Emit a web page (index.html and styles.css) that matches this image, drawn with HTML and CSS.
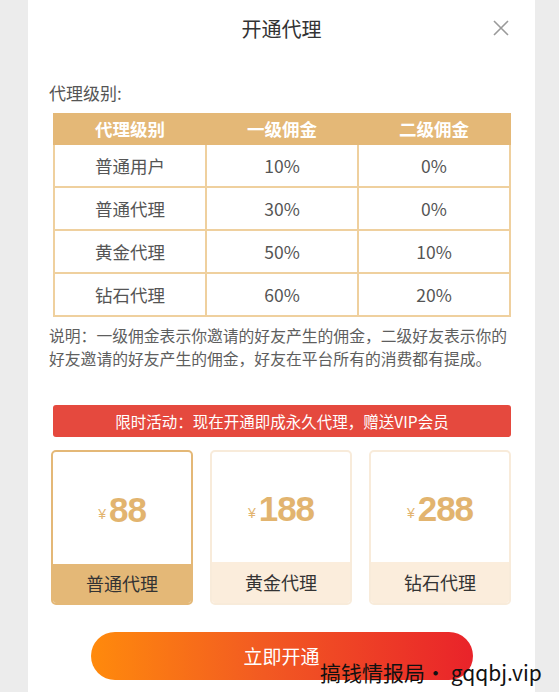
FILE: index.html
```html
<!DOCTYPE html>
<html lang="zh">
<head>
<meta charset="utf-8">
<link rel="stylesheet" href="styles.css">
</head>
<body>
<div class="panel">
  <div class="header">
    <span class="title">开通代理</span>
    <svg class="close" width="16" height="16" viewBox="0 0 16 16"><path d="M1 1L15 15M15 1L1 15" stroke="#9a9a9a" stroke-width="1.6" fill="none"/></svg>
  </div>
  <div class="label">代理级别:</div>
  <table class="levels">
    <thead>
      <tr><th>代理级别</th><th>一级佣金</th><th>二级佣金</th></tr>
    </thead>
    <tbody>
      <tr><td>普通用户</td><td>10%</td><td>0%</td></tr>
      <tr><td>普通代理</td><td>30%</td><td>0%</td></tr>
      <tr><td>黄金代理</td><td>50%</td><td>10%</td></tr>
      <tr><td>钻石代理</td><td>60%</td><td>20%</td></tr>
    </tbody>
  </table>
  <p class="desc">说明：一级佣金表示你邀请的好友产生的佣金，二级好友表示你的好友邀请的好友产生的佣金，好友在平台所有的消费都有提成。</p>
  <div class="banner">限时活动：现在开通即成永久代理，赠送VIP会员</div>
  <div class="cards">
    <div class="card active">
      <div class="price"><span class="yen">¥</span><span class="num">88</span></div>
      <div class="name">普通代理</div>
    </div>
    <div class="card">
      <div class="price"><span class="yen">¥</span><span class="num">188</span></div>
      <div class="name">黄金代理</div>
    </div>
    <div class="card">
      <div class="price"><span class="yen">¥</span><span class="num">288</span></div>
      <div class="name">钻石代理</div>
    </div>
  </div>
  <div class="btn-wrap"><div class="btn">立即开通</div></div>
</div>
<div class="watermark">搞钱情报局· gqqbj.vip</div>
</body>
</html>
```
FILE: styles.css
```css
* { box-sizing: border-box; }
html, body { margin: 0; padding: 0; }
body {
  background: #ececec;
  width: 559px;
  height: 692px;
  overflow: hidden;
  position: relative;
  font-family: "Noto Sans CJK SC", "Noto Sans", sans-serif;
}
.panel {
  margin-left: 28px;
  width: 507px;
  height: 692px;
  background: #fff;
  padding: 0 21px;
}
.header {
  height: 56px;
  display: flex;
  align-items: center;
  justify-content: center;
  position: relative;
}
.title {
  font-size: 20px;
  color: #333;
}
.close {
  position: absolute;
  right: 5px;
  top: 20px;
}
.label {
  margin-top: 26px;
  font-size: 17px;
  line-height: 22px;
  color: #555;
}
.levels {
  margin: 9px 0 0 4px;
  width: 458px;
  border-collapse: collapse;
  table-layout: fixed;
}
.levels th {
  background: #e4b877;
  color: #fff;
  font-weight: bold;
  font-size: 17.5px;
  height: 30px;
  padding: 0;
  line-height: 28px;
  border: 2px solid #e4b877;
}
.levels td {
  border: 2px solid #efd09e;
  height: 43px;
  padding: 0;
  text-align: center;
  font-size: 17.5px;
  color: #555;
}
.desc {
  margin: 7px 0 0 0;
  font-size: 15.8px;
  line-height: 23px;
  color: #5e5e5e;
}
.banner {
  margin: 35px 0 0 4px;
  width: 458px;
  height: 32px;
  line-height: 32px;
  background: #e5493e;
  border-radius: 3px;
  color: #fff;
  text-align: center;
  font-size: 15.5px;
}
.cards {
  margin: 13px 0 0 2px;
  display: flex;
  gap: 17px;
}
.card {
  width: 142px;
  height: 155px;
  border: 2px solid #f8ebda;
  border-radius: 5px;
  overflow: hidden;
  display: flex;
  flex-direction: column;
}
.card.active { border-color: #e4b877; }
.price {
  flex: 1;
  display: flex;
  align-items: center;
  justify-content: center;
  color: #e2b46f;
  padding-top: 4px;
}
.yen {
  font-size: 14px;
  margin-right: 3px;
  margin-top: 8px;
  font-family: "Liberation Sans", sans-serif;
}
.num {
  font-family: "Liberation Sans", sans-serif;
  font-weight: bold;
  font-size: 35px;
  letter-spacing: -1px;
}
.name {
  height: 41px;
  line-height: 41px;
  text-align: center;
  background: #fbeddc;
  font-size: 18px;
  color: #333;
}
.card.active .name { background: #e4b877; height: 39px; line-height: 39px; }
.btn-wrap {
  margin-top: 27px;
  display: flex;
  justify-content: center;
}
.btn {
  width: 382px;
  height: 48px;
  border-radius: 24px;
  background: linear-gradient(90deg, #ff8a0c 0%, #f25a22 45%, #e9232a 100%);
  color: #fff;
  font-size: 19px;
  line-height: 48px;
  text-align: center;
}
.watermark {
  position: absolute;
  left: 320px;
  top: 657px;
  font-size: 21px;
  line-height: 30px;
  color: #111;
  white-space: nowrap;
}
```
